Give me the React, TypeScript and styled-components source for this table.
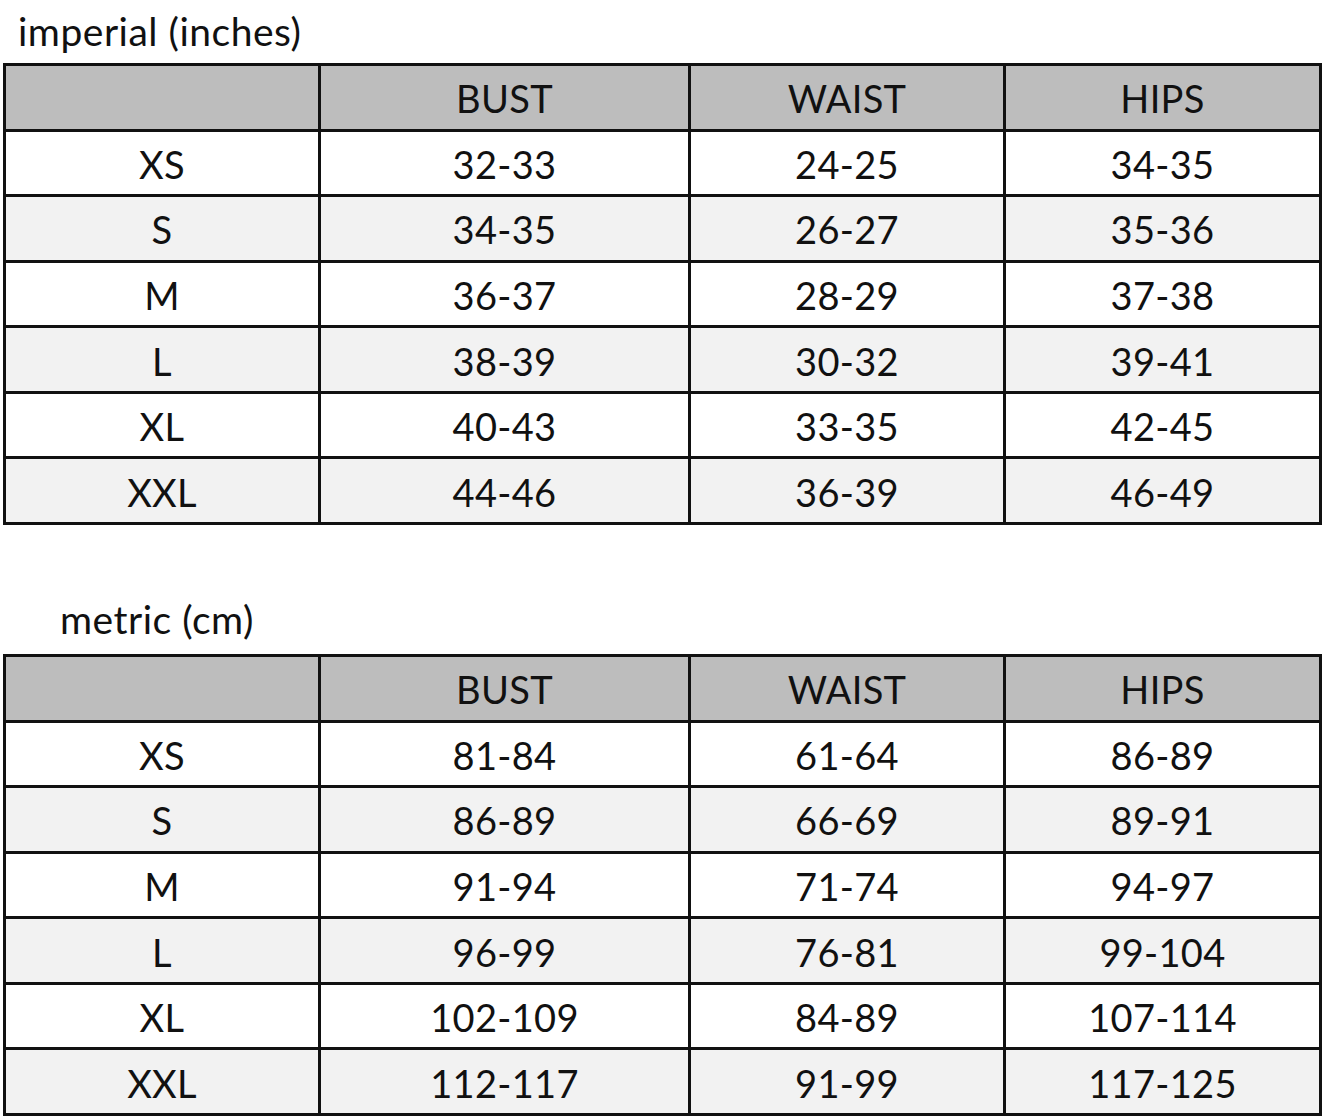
import styled, { createGlobalStyle } from "styled-components";

const GlobalStyle = createGlobalStyle`
    html, body {
        margin: 0;
        padding: 0;
        background: #ffffff;
    }
    body {
        font-family: Lato, "Noto Sans", sans-serif;
        color: #111111;
    }
`;

type Row = { size: string; bust: string; waist: string; hips: string };

const imperialRows: Row[] = [
    { size: "XS", bust: "32-33", waist: "24-25", hips: "34-35" },
    { size: "S", bust: "34-35", waist: "26-27", hips: "35-36" },
    { size: "M", bust: "36-37", waist: "28-29", hips: "37-38" },
    { size: "L", bust: "38-39", waist: "30-32", hips: "39-41" },
    { size: "XL", bust: "40-43", waist: "33-35", hips: "42-45" },
    { size: "XXL", bust: "44-46", waist: "36-39", hips: "46-49" },
];

const metricRows: Row[] = [
    { size: "XS", bust: "81-84", waist: "61-64", hips: "86-89" },
    { size: "S", bust: "86-89", waist: "66-69", hips: "89-91" },
    { size: "M", bust: "91-94", waist: "71-74", hips: "94-97" },
    { size: "L", bust: "96-99", waist: "76-81", hips: "99-104" },
    { size: "XL", bust: "102-109", waist: "84-89", hips: "107-114" },
    { size: "XXL", bust: "112-117", waist: "91-99", hips: "117-125" },
];

const SizeTable = ({ rows }: { rows: Row[] }) => {
    return (
        <Grid>
            <Cell $kind="head" />
            <Cell $kind="head">BUST</Cell>
            <Cell $kind="head">WAIST</Cell>
            <Cell $kind="head">HIPS</Cell>
            {rows.map((row, i) => {
                const kind = i % 2 === 0 ? "odd" : "even";
                return [
                    <Cell key={row.size + "s"} $kind={kind}>{row.size}</Cell>,
                    <Cell key={row.size + "b"} $kind={kind}>{row.bust}</Cell>,
                    <Cell key={row.size + "w"} $kind={kind}>{row.waist}</Cell>,
                    <Cell key={row.size + "h"} $kind={kind}>{row.hips}</Cell>,
                ];
            })}
        </Grid>
    );
};

const App = () => {
    return (
        <Page>
            <GlobalStyle />
            <Title $indent={18} $height={63} $pad={12}>imperial (inches)</Title>
            <SizeTable rows={imperialRows} />
            <Title $indent={60} $height={129} $pad={15}>metric (cm)</Title>
            <SizeTable rows={metricRows} />
        </Page>
    );
};

const Page = styled.div`
    width: 1325px;
    padding: 0 0 0 3px;
    box-sizing: border-box;
`;

const Title = styled.div<{ $indent: number; $height: number; $pad: number }>`
    height: ${(p) => p.$height}px;
    display: flex;
    align-items: flex-end;
    box-sizing: border-box;
    padding-left: ${(p) => p.$indent - 3}px;
    padding-bottom: ${(p) => p.$pad}px;
    font-size: 39px;
    line-height: 40px;
    letter-spacing: 0.5px;
    color: #111111;
`;

const Grid = styled.div`
    width: 1319px;
    height: 462px;
    box-sizing: border-box;
    display: grid;
    grid-template-columns: 312px 367px 312px 313px;
    grid-template-rows: repeat(7, 1fr);
    gap: 3px;
    padding: 3px;
    background: #111111;
`;

const cellBg = { head: "#bdbdbd", odd: "#ffffff", even: "#f2f2f2" };

const Cell = styled.div<{ $kind: "head" | "odd" | "even" }>`
    background: ${(p) => cellBg[p.$kind]};
    display: flex;
    align-items: center;
    justify-content: center;
    font-size: 38px;
    letter-spacing: 0.3px;
    color: #111111;
    padding-top: 2px;
`;

export default App;
